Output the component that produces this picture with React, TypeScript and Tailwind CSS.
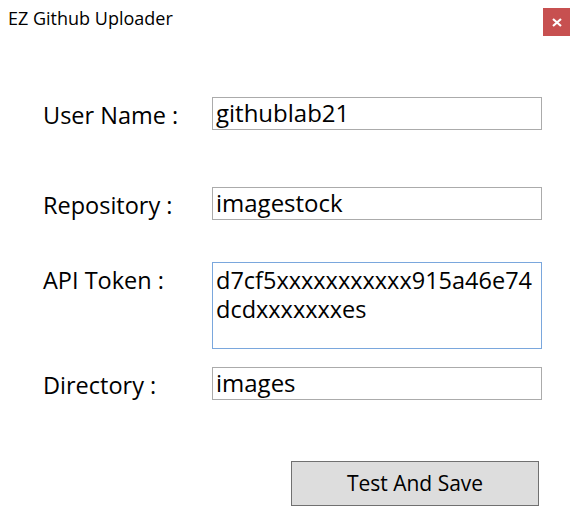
import React from "react";

const font = { fontFamily: '"Segoe UI", "Open Sans", "Noto Sans", sans-serif' };

function Row({ label, value, mt }: { label: string; value: string; mt: string }) {
  return (
    <div className={`flex items-center ${mt}`}>
      <div className="w-[169px] text-[23.5px] text-black leading-none pt-[5px]">{label}</div>
      <div className="w-[330px] h-[33px] border border-[#ababab] bg-white flex items-center px-[3px] pb-[2px] text-[24px] text-black leading-none">
        {value}
      </div>
    </div>
  );
}

export default function App() {
  return (
    <div className="w-[571px] h-[508px] bg-white relative overflow-hidden" style={font}>
      <div className="h-[44px] flex items-start justify-between">
        <div className="pl-[8px] pt-[7px] text-[18px] text-black leading-tight">EZ Github Uploader</div>
        <div className="mt-[8px] mr-[1px] w-[27px] h-[28px] bg-[#c75050] flex items-center justify-center">
          <svg width="10" height="9" viewBox="0 0 10 9">
            <path d="M1 1 L9 8 M9 1 L1 8" stroke="white" strokeWidth="2.2" />
          </svg>
        </div>
      </div>
      <div className="pl-[43px]">
        <div className="mt-[53px]">
          <Row label="User Name :" value="githublab21" mt="" />
        </div>
        <Row label="Repository :" value="imagestock" mt="mt-[57px]" />
        <div className="flex items-start mt-[42px]">
          <div className="w-[169px] text-[23.5px] text-black leading-none pt-[7px]">API Token :</div>
          <div className="w-[330px] h-[87px] border border-[#7aa7dd] bg-white px-[3px] pt-[3px] text-[23.5px] text-black leading-[29px] break-all">
            d7cf5xxxxxxxxxxx915a46e74
            <br />
            dcdxxxxxxxes
          </div>
        </div>
        <Row label="Directory :" value="images" mt="mt-[18px]" />
        <div className="mt-[61px] pl-[248px]">
          <div className="w-[248px] h-[45px] border border-[#707070] bg-[#dddddd] flex items-center justify-center text-[21px] text-black leading-none">
            Test And Save
          </div>
        </div>
      </div>
    </div>
  );
}
